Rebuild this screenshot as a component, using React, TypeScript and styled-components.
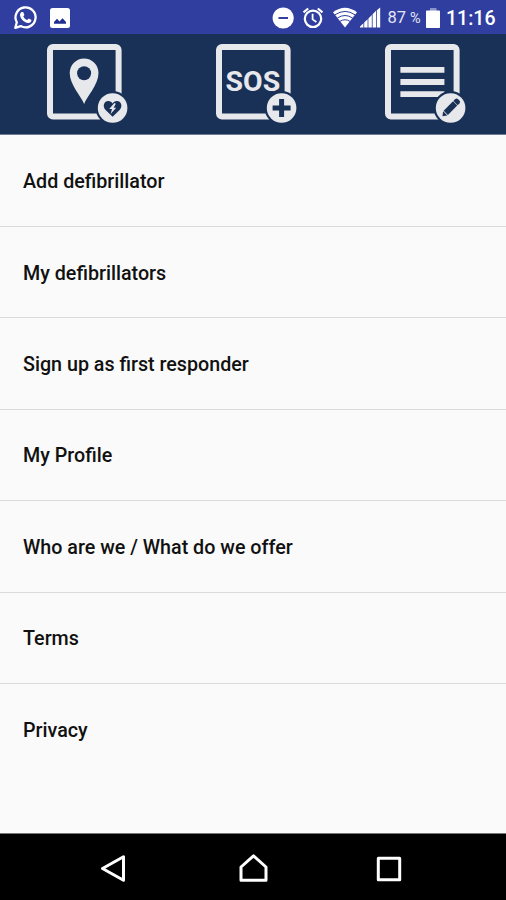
import React from "react";
import styled, { createGlobalStyle } from "styled-components";

const NAVY = "#193156";
const PALE = "#e7e8ec";

const GlobalStyle = createGlobalStyle`
  html, body, #root { height: 100%; }
  body {
    margin: 0;
    background: #fafafa;
    font-family: Roboto, "Liberation Sans", sans-serif;
  }
`;

const Screen = styled.div`
  display: flex;
  flex-direction: column;
  width: 506px;
  height: 900px;
  overflow: hidden;
`;

const StatusBar = styled.header`
  display: flex;
  flex: none;
  align-items: center;
  justify-content: space-between;
  box-sizing: border-box;
  height: 34px;
  padding: 1px 11px 0 13px;
  background: #303f9f;
  color: #fff;
`;

const StatusGroup = styled.div<{ $gap: number }>`
  display: flex;
  align-items: center;
  gap: ${(p) => p.$gap}px;
`;

const StatusIcon = styled.svg`
  display: block;
  flex: none;
  fill: #fff;
`;

const Charge = styled.span`
  width: 38.5px;
  margin: 2px 0 0 5.5px;
  font-size: 16.5px;
  line-height: 20px;
  white-space: nowrap;
  color: #e4e6f5;
  small {
    font-size: 14.5px;
    margin-left: 4px;
  }
`;

const Clock = styled.time`
  width: 49px;
  margin: 2px 0 0 6px;
  font-size: 19.5px;
  font-weight: 500;
  line-height: 22px;
  white-space: nowrap;
`;

const TabBar = styled.nav`
  display: grid;
  flex: none;
  grid-template-columns: repeat(3, 1fr);
  box-sizing: border-box;
  height: 101px;
  padding-top: 4px;
  background: ${NAVY};
  border-bottom: 1px solid #6f7d94;
`;

const Tab = styled.button`
  display: flex;
  justify-content: center;
  align-items: flex-start;
  padding: 0;
  border: 0;
  background: none;
`;

const TabSvg = styled.svg`
  display: block;
  width: 92px;
  height: 92px;
`;

const SosText = styled.text`
  font-family: Roboto, sans-serif;
  font-size: 27.5px;
  font-weight: 700;
  fill: ${PALE};
`;

const Menu = styled.ul`
  flex: 1;
  margin: 0;
  padding: 0.7px 0 0;
  list-style: none;
  background: #fafafa;
`;

const MenuItem = styled.li`
  display: flex;
  align-items: center;
  box-sizing: border-box;
  height: 91.4px;
  padding: 1.6px 23px 0;
  border-bottom: 1px solid #dadada;
  color: #111;
  font-size: 19.7px;
  font-weight: 500;
  &:last-child {
    border-bottom-color: transparent;
  }
`;

const NavBar = styled.footer`
  display: flex;
  flex: none;
  justify-content: space-between;
  align-items: center;
  box-sizing: border-box;
  height: 67px;
  padding: 3px 101px 0 99px;
  background: #000;
  border-top: 1px solid #777;
`;

const NavSvg = styled.svg`
  display: block;
  width: 32px;
  height: 32px;
  fill: none;
  stroke: #fff;
  stroke-width: 3;
  stroke-linejoin: round;
`;

function TabIcon({ children, badge }: { children?: React.ReactNode; badge: React.ReactNode }) {
  return (
    <TabSvg viewBox="0 0 92 92">
      <rect x="12" y="9" width="68.6" height="69.6" rx="3" fill="none" stroke={PALE} strokeWidth="6" />
      {children}
      <circle cx="74.6" cy="70" r="17" fill={NAVY} />
      <circle cx="74.6" cy="70" r="14.8" fill={PALE} />
      {badge}
    </TabSvg>
  );
}

const PinTab = () => (
  <TabIcon
    badge={
      <>
        <path
          d="M74.6 78.8 L67.6 72 C63.9 67.8 66.4 63 70.2 63 C72.3 63 73.8 64 74.6 65.6 C75.4 64 76.9 63 79 63 C82.8 63 85.3 67.8 81.6 72 Z"
          fill={NAVY}
        />
        <path d="M76.4 65 L71.2 71 H74 L72.6 76 L78.2 69.8 H75.6 L77.8 65.8 Z" fill={PALE} />
      </>
    }
  >
    <path
      d="M46.1 66 C43.5 58.5 31.7 47 31.7 35 A14.4 14.6 0 0 1 60.5 35 C60.5 47 48.7 58.5 46.1 66 Z"
      fill={PALE}
    />
    <circle cx="46.1" cy="35.2" r="7" fill={NAVY} />
  </TabIcon>
);

const SosTab = () => (
  <TabIcon badge={<path d="M74.6 61 V79 M65.6 70 H83.6" stroke={NAVY} strokeWidth="5" />}>
    <SosText x="18.6" y="53.2" textLength="54.6" lengthAdjust="spacingAndGlyphs">
      SOS
    </SosText>
  </TabIcon>
);

const FormTab = () => (
  <TabIcon
    badge={
      <g transform="translate(74.6 70) rotate(-45)" fill={NAVY}>
        <path d="M-11.5 0 L-7.6 -3 V3 Z" />
        <rect x="-6.8" y="-3" width="13.2" height="6" />
        <path d="M7 -3 H9.4 Q11.5 -3 11.5 -1 V1 Q11.5 3 9.4 3 H7 Z" />
      </g>
    }
  >
    <path d="M24.4 31.8 H68.4 M24.4 44 H68.4 M24.4 56.1 H68.4" stroke={PALE} strokeWidth="5.8" />
  </TabIcon>
);

const menuItems = [
  "Add defibrillator",
  "My defibrillators",
  "Sign up as first responder",
  "My Profile",
  "Who are we / What do we offer",
  "Terms",
  "Privacy",
];

export default function App() {
  return (
    <Screen>
      <GlobalStyle />
      <StatusBar>
        <StatusGroup $gap={12}>
          <StatusIcon width="25" height="25" viewBox="0 0 25 25">
            <path
              d="M2.3 22.8 L3.8 17.2 A10 10 0 1 1 7.7 21.1 Z"
              fill="none"
              stroke="#fff"
              strokeWidth="2.3"
              strokeLinejoin="round"
            />
            <path d="M8.6 7 L10.2 7 L11.4 10 L10.3 11.5 C11.3 13.5 12.5 14.4 14.2 15.1 L15.7 13.6 L18.5 15 C18.4 17.2 16.8 18.2 15 18 C11 17.6 7.2 13.6 7 10 C7 8.7 7.7 7.5 8.6 7 Z" />
          </StatusIcon>
          <StatusIcon width="20" height="20" viewBox="0 0 20 20">
            <rect width="20" height="20" rx="2.5" />
            <path d="M4 15.7 V14 L7 10.8 L9.5 13.4 L12.5 10.3 L16 14 V15.7 Z" fill="#202f91" />
          </StatusIcon>
        </StatusGroup>
        <StatusGroup $gap={0}>
          <StatusIcon width="110" height="24" viewBox="0 0 110 24">
            <circle cx="11.2" cy="12" r="10.6" />
            <path d="M6.5 12 H16" stroke="#303f9f" strokeWidth="2" />
            <g fill="none" stroke="#fff">
              <circle cx="41" cy="12.8" r="8.2" strokeWidth="2.2" />
              <path d="M40.6 7.8 V13.4 L44.4 16" strokeWidth="1.8" />
              <path d="M31.5 6.3 L36.2 2.5 M50.5 6.3 L45.8 2.5" strokeWidth="2.2" />
            </g>
            <path d="M61 6.3 Q73 -3 85 6.3 L73 21.5 Z" />
            <path
              d="M63 8.8 Q73 2 83 8.8 M65.4 12 Q73 7 80.6 12 M68 15.3 Q73 12.2 78 15.3"
              fill="none"
              stroke="#303f9f"
              strokeWidth="1"
            />
            <path d="M88 21.5 V20.5 L91.4 17.2 V21.5 Z M92.2 21.5 V16.4 L95.6 13.2 V21.5 Z M96.4 21.5 V12.4 L99.8 9 V21.5 Z M100.6 21.5 V8.2 L104 4.8 V21.5 Z M104.8 21.5 V4.2 L108.2 1.5 V21.5 Z" />
          </StatusIcon>
          <Charge>
            87<small>%</small>
          </Charge>
          <StatusIcon width="14" height="20" viewBox="0 0 14 20">
            <rect x="4" width="6.5" height="3" fill="#8993c9" />
            <rect y="2.4" width="14" height="17.6" rx=".8" />
          </StatusIcon>
          <Clock>11:16</Clock>
        </StatusGroup>
      </StatusBar>
      <TabBar>
        <Tab aria-label="Map">
          <PinTab />
        </Tab>
        <Tab aria-label="SOS">
          <SosTab />
        </Tab>
        <Tab aria-label="Form">
          <FormTab />
        </Tab>
      </TabBar>
      <Menu>
        {menuItems.map((label) => (
          <MenuItem key={label}>{label}</MenuItem>
        ))}
      </Menu>
      <NavBar>
        <NavSvg viewBox="0 0 32 32">
          <path d="M3.5 15.5 L24.5 3.8 V27.2 Z" />
        </NavSvg>
        <NavSvg viewBox="0 0 32 32">
          <path d="M5 27.3 V14 L17.5 2.8 L30 14 V27.3 Z" />
        </NavSvg>
        <NavSvg viewBox="0 0 32 32">
          <rect x="5.3" y="5.3" width="21.4" height="21.4" />
        </NavSvg>
      </NavBar>
    </Screen>
  );
}
